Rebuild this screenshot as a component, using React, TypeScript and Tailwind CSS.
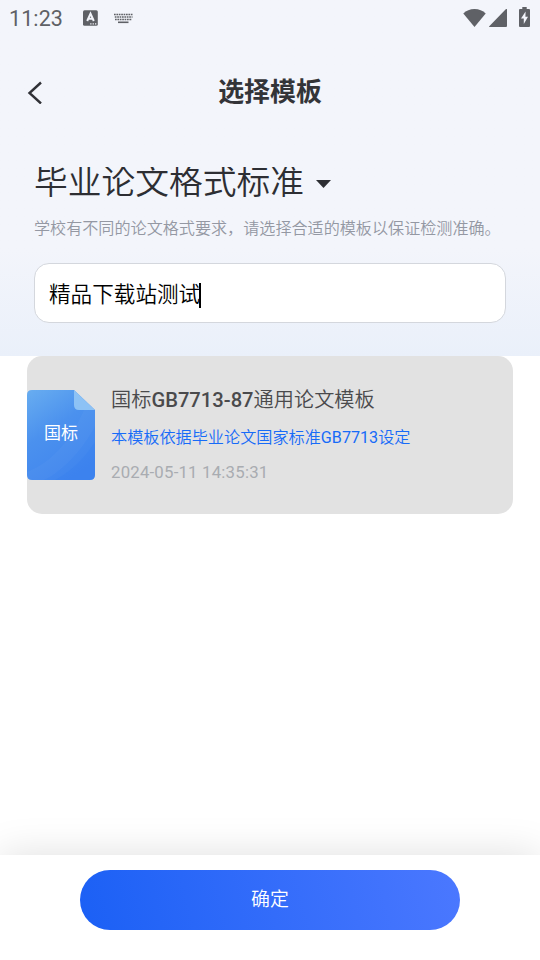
function StatusBar() {
  return (
    <div className="flex h-9 items-center pl-[9px] pr-[9px] text-[#5f6166]">
      <span className="w-[73px] pt-0.5 text-[21.5px] leading-none tracking-[0.1px]">11:23</span>
      <svg className="h-4 w-4" viewBox="0 0 16 16">
        <rect x="1" y="0.3" width="14.8" height="15.4" rx="1.5" fill="currentColor" />
        <path d="M5.2 11 8.5 3.6l3.3 7.4M6.6 8.8h3.8" fill="none" stroke="#f3f5fb" strokeWidth="2" />
        <path d="M8.2 13.2h1.3v1.2H8.2zm2.4 0h1.3v1.2h-1.3zm2.4 0h1.3v1.2H13z" fill="#f3f5fb" />
      </svg>
      <svg className="ml-4 h-3 w-[19px]" viewBox="0 0 19 12" fill="none" stroke="currentColor" strokeWidth="1.6">
        <path d="M0 2.5h19" strokeDasharray="1.7 0.7" />
        <path d="M0.8 5h17.7" strokeDasharray="1.7 0.7" />
        <path d="M1 7.5h17" strokeDasharray="1.7 0.7" />
        <path d="M4 10.3h10.5" />
      </svg>
      <svg className="ml-auto h-[18px] w-[23px]" viewBox="0 0 23 18" fill="currentColor">
        <path d="M0.3 4.6C3.2 1.6 7 0 11.5 0s8.3 1.6 11.2 4.6L11.5 18z" />
      </svg>
      <svg className="ml-[3px] h-[18px] w-[18px]" viewBox="0 0 18 18" fill="currentColor">
        <path d="M16.5 0.5q1.5-1.4 1.5 0.5v16q0 1-1 1H1q-1.5 0-0.5-1z" />
      </svg>
      <svg className="ml-3 mr-px mb-0.5 h-5 w-[11px]" viewBox="0 0 11 20" fill="currentColor">
        <path d="M3.3 0h4.4v2H10q1 0 1 1v16q0 1-1 1H1q-1 0-1-1V3q0-1 1-1h2.3z" />
        <path d="M6.6 4.5 2 11.5h2.8v5.5L9 9.8H6.4z" fill="#f3f5fb" />
      </svg>
    </div>
  );
}

function FileIcon() {
  return (
    <div className="relative h-[90px] w-[68px]">
      <svg className="h-full w-full" viewBox="0 0 68 90">
        <defs>
          <linearGradient id="file" x1="0.1" y1="0" x2="0.6" y2="1">
            <stop offset="0" stopColor="#66abf0" />
            <stop offset="0.45" stopColor="#4b91ee" />
            <stop offset="1" stopColor="#4085ee" />
          </linearGradient>
        </defs>
        <path d="M5 0h42l21 20v65q0 5-5 5H5q-5 0-5-5V5q0-5 5-5z" fill="url(#file)" />
        <path d="M0 82C22 73 42 55 57 20h11v16C57 58 35 82 17 90H5q-5 0-5-5z" fill="#fff" opacity="0.03" />
        <path d="M68 52v33q0 5-5 5H28C45 81 57 68 68 52z" fill="#2474ed" opacity="0.12" />
        <path d="M47 0l21 20H52q-5 0-5-5z" fill="#8dc2f5" />
      </svg>
      <span className="absolute inset-x-0 top-[31px] text-center text-[17px] leading-[25px] text-white">国标</span>
    </div>
  );
}

export default function App() {
  return (
    <div className="flex h-[960px] w-[540px] flex-col overflow-hidden bg-white font-['Roboto','Noto_Sans_CJK_SC',sans-serif]">
      <header className="h-[356px] bg-linear-to-b from-[#f3f5fb] from-70% to-[#eaf0fa]">
        <StatusBar />
        <div className="grid h-28 grid-cols-[80px_1fr_80px] items-center">
          <button className="pl-[27px]" aria-label="返回">
            <svg className="h-6 w-4" viewBox="0 0 16 24" fill="none" stroke="#303136" strokeWidth="2.4">
              <path d="M14 2.5 2.5 13 14 23.5" />
            </svg>
          </button>
          <h1 className="text-center text-[25.9px] font-bold leading-10 text-[#333438]">选择模板</h1>
        </div>
        <div className="px-[34px] pt-[19px]">
          <button className="flex h-[34px] items-center overflow-hidden">
            <span className="-mt-[3px] text-[33.75px] leading-[34px] font-[350] text-[#2d2e33]">毕业论文格式标准</span>
            <svg className="ml-3 h-2 w-[15px]" viewBox="0 0 15 8" fill="#2d2e33">
              <path d="M0 0h15L7.5 8z" />
            </svg>
          </button>
          <p className="mt-4 whitespace-nowrap text-[16.1px] leading-6 font-[350] text-[#9498a3]">
            学校有不同的论文格式要求，请选择合适的模板以保证检测准确。
          </p>
          <div className="mt-[22px] flex h-[60px] items-center rounded-[15px] border border-[#d4d7dd] bg-white pl-[14px]">
            <span className="pt-1 text-[21.6px] font-[350] text-black">精品下载站测试</span>
            <span className="-ml-px mt-1 h-[25px] w-[2px] bg-black" />
          </div>
        </div>
      </header>

      <main className="flex-1 px-[27px]">
        <div className="flex h-[158px] items-center rounded-[15px] bg-[#e2e2e2]">
          <FileIcon />
          <div className="ml-4 whitespace-nowrap pb-0.5">
            <h2 className="-mt-px text-[20.2px] leading-[30px] font-[350] text-[#4a4a4c]">
              国标<span className="font-medium">GB7713-87</span>通用论文模板
            </h2>
            <p className="mt-[11px] text-[16.15px] leading-6 font-[350] text-[#176bf8]">
              本模板依据毕业论文国家标准<span className="font-normal">GB7713</span>设定
            </p>
            <p className="-mb-px mt-2.5 text-[16.8px] leading-6 tracking-[0.2px] text-[#a9acb1]">2024-05-11 14:35:31</p>
          </div>
        </div>
      </main>

      <footer className="h-[105px] bg-white px-20 pt-[15px] shadow-[0_0_40px_rgba(0,0,0,0.13)]">
        <button className="h-[60px] w-full rounded-full bg-linear-[75deg,#1b60f5,#4b78ff] pt-px text-[18.9px] font-[350] text-white">
          确定
        </button>
      </footer>
    </div>
  );
}
